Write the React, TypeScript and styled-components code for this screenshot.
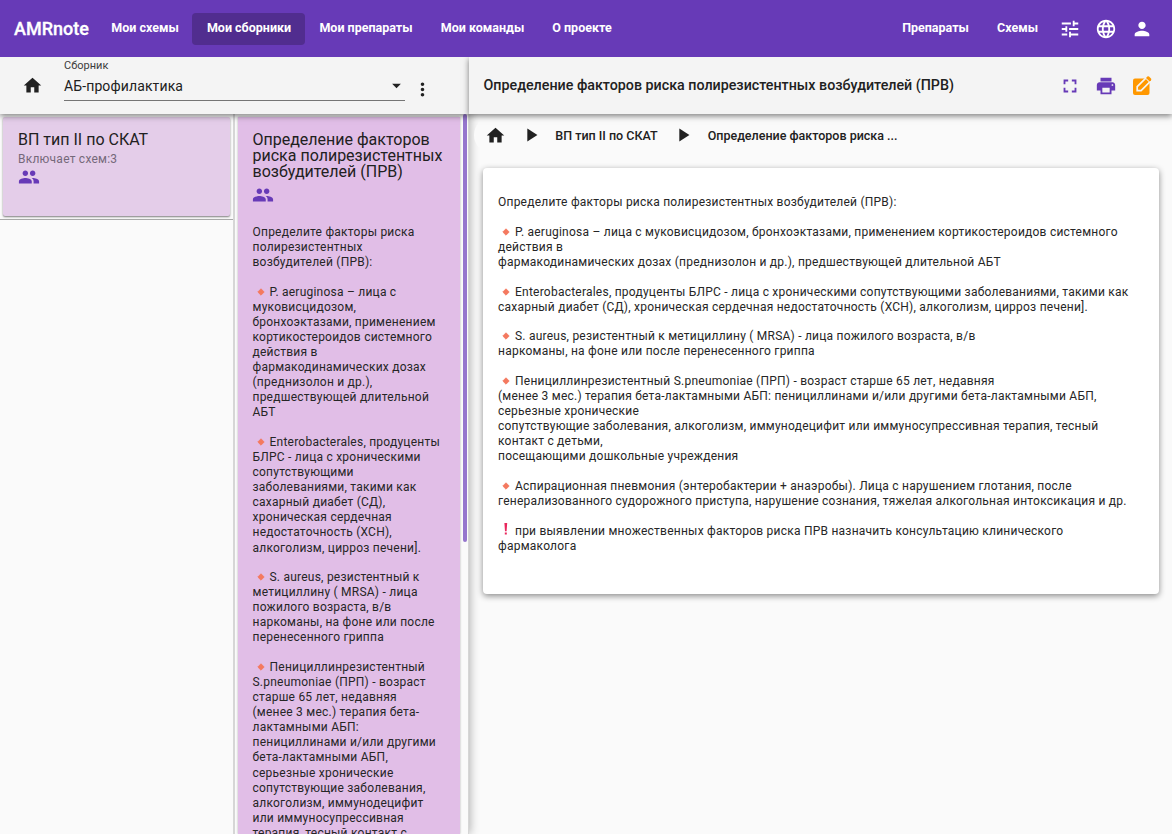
import React from 'react';
import styled, { createGlobalStyle } from 'styled-components';
import { MdHome, MdTune, MdLanguage, MdPerson, MdFullscreen, MdPrint, MdGroup, MdMoreVert, MdPlayArrow, MdArrowDropDown } from 'react-icons/md';

const Global = createGlobalStyle`
  * { box-sizing: border-box; }
  body { margin: 0; overflow: hidden; background: #fafafa; color: #212121; font-family: Roboto, "Liberation Sans", sans-serif; }
  svg { display: block; flex: none; }
`;

const Page = styled.div`
  height: 834px;
  display: flex;
  flex-direction: column;
  overflow: hidden;
`;

const Header = styled.header`
  height: 57px;
  flex: none;
  display: flex;
  align-items: center;
  position: relative;
  z-index: 3;
  padding: 0 19.5px 0 14px;
  background: #673ab7;
  color: #fff;
`;

const Brand = styled.div`
  width: 83px;
  font-size: 18px;
  font-weight: 500;
  white-space: nowrap;
  -webkit-text-stroke: 0.3px #fff;
`;

const NavItem = styled.a<{ $active?: boolean; $width: number }>`
  width: ${p => p.$width}px;
  height: 32px;
  flex: none;
  display: flex;
  align-items: center;
  justify-content: center;
  padding: 0 0 2px 1px;
  border-radius: 4px;
  background: ${p => (p.$active ? '#512d8f' : 'transparent')};
  font-size: 12.5px;
  font-weight: 700;
  white-space: nowrap;
`;

const Spacer = styled.div`
  flex: 1;
`;

const HeaderIcons = styled.div`
  display: flex;
  gap: 14px;
  margin-left: 7px;
`;

const Main = styled.main`
  flex: 1;
  min-height: 0;
  display: flex;
`;

const Side = styled.aside`
  width: 469px;
  flex: none;
  display: flex;
  flex-direction: column;
  position: relative;
  z-index: 1;
  background: #fafafa;
  border-right: 1px solid #d6d6d6;
  box-shadow: 1px 0 9px rgba(0, 0, 0, 0.3);
`;

const Bar = styled.div`
  height: 57px;
  flex: none;
  display: flex;
  align-items: center;
  position: relative;
  z-index: 2;
  background: #f4f4f4;
  box-shadow: 0 2px 6px rgba(0, 0, 0, 0.5);
`;

const SideBar = styled(Bar)`
  padding-left: 21.5px;
  margin-right: -1px;
`;

const Select = styled.div`
  width: 341px;
  height: 43px;
  margin: 0 7px 13px 21.5px;
  display: flex;
  flex-direction: column;
  border-bottom: 1px solid #757575;
`;

const SelectLabel = styled.span`
  font-size: 11px;
  line-height: 16px;
  color: #3c3c3c;
`;

const SelectValue = styled.div`
  display: flex;
  align-items: center;
  justify-content: space-between;
  height: 24px;
  margin-right: -2px;
  font-size: 14px;
  letter-spacing: 0.12px;
`;

const Kebab = styled.div`
  padding-top: 7px;
`;

const Columns = styled.div`
  flex: 1;
  min-height: 0;
  display: flex;
  overflow: hidden;
`;

const ListColumn = styled.div`
  width: 235px;
  flex: none;
  border-right: 2px solid #d6d6d6;
`;

const ListCell = styled.div`
  height: 106px;
  padding: 3px 3px 0;
  border-bottom: 1px solid #a8a8a8;
`;

const ListCard = styled.div`
  width: 227px;
  height: 99px;
  padding: 15px;
  background: #e4cde9;
  border-radius: 2px;
  box-shadow: 0 1px 2px rgba(0, 0, 0, 0.5);
`;

const CardTitle = styled.h2`
  margin: 0;
  font-size: 16px;
  line-height: 16px;
  font-weight: 400;
  white-space: pre;
`;

const CardMeta = styled.div`
  margin: 4px 0 0;
  font-size: 12px;
  line-height: 14px;
  letter-spacing: 0.23px;
  color: #75697a;
`;

const GroupIcon = styled(MdGroup)`
  margin-left: -0.5px;
  color: #673ab7;
`;

const DetailCard = styled.div`
  width: 222px;
  margin: 3px 3px 0;
  padding: 15px 15px 15px 14.5px;
  flex: none;
  background: #e1bee7;
  box-shadow: 0 0 2px rgba(0, 0, 0, 0.3);
`;

const TitleIcon = styled.div`
  margin: 4px 0 19px;
`;

const Thumb = styled.div`
  width: 4px;
  height: 428px;
  border-radius: 2px;
  background: #9575cd;
`;

const Para = styled.p`
  margin: 0 0 14.4px;
  color: #262626;
  font-size: 12px;
  line-height: 15.1px;
  letter-spacing: 0.23px;
  white-space: pre;
`;

const Mark = styled.span`
  display: inline-flex;
  width: 17px;
  height: 10px;
  padding-left: 4.3px;
  vertical-align: 0;
`;

const Content = styled.section`
  flex: 1;
  min-width: 0;
  display: flex;
  flex-direction: column;
`;

const ContentBar = styled(Bar)`
  padding: 0 19.5px 0 14.5px;
  gap: 14px;
`;

const ContentTitle = styled.h1`
  flex: 1;
  margin: 0;
  padding-bottom: 1px;
  font-size: 14.28px;
  font-weight: 500;
`;

const Crumbs = styled.nav`
  height: 36px;
  margin: 3px 0 0 5px;
  padding-left: 10.5px;
  display: flex;
  align-items: center;
  position: relative;
  z-index: 1;
  font-size: 12.5px;
  font-weight: 500;
  border-radius: 18px;
  background: #fafafa;
`;

const CrumbArrow = styled.div<{ $before: number; $after: number }>`
  margin: 0 ${p => p.$after}px 0 ${p => p.$before}px;
`;

const Article = styled.article`
  position: relative;
  z-index: 1;
  width: 676px;
  height: 426px;
  margin: 15px 0 0 14px;
  padding: 27.4px 15px;
  background: #fff;
  border-radius: 4px;
  box-shadow: 0 2px 6px rgba(0, 0, 0, 0.45);
`;

const Diamond = () => (
  <Mark><svg width="8" height="8" viewBox="0 0 8 8"><path d="M4 .8 7.2 4 4 7.2.8 4z" fill="#f4795f" stroke="#f4795f" strokeWidth=".8" strokeLinejoin="round" /></svg></Mark>
);
const Exclamation = () => (
  <Mark><svg width="6" height="12" viewBox="0 0 6 12"><path d="M2.4 0h2.8L4.6 8.3H3zM2.8 9.6h2v2h-2z" fill="#e9265c" /></svg></Mark>
);
const EditIcon = () => (
  <svg width="22" height="22" viewBox="0 0 22 22">
    <rect x="2" y="3.5" width="16.5" height="16.5" rx="2" fill="#ff9800" />
    <path d="M6.2 11.7 15 2.9l3.9 3.9-8.8 8.8H6.2z" fill="#ff9800" stroke="#f4f4f4" strokeWidth="1.7" />
    <path d="m15 3 1.4-1.4q.8-.7 1.6 0l2 2q.7.8 0 1.6l-1.4 1.4z" fill="#ff9800" />
  </svg>
);

type Block = { mark?: 'diamond' | 'warn'; text: string };

const sideText: Block[] = [
  { text: 'Определите факторы риска\nполирезистентных\nвозбудителей (ПРВ):' },
  { mark: 'diamond', text: 'P. aeruginosa – лица с\nмуковисцидозом,\nбронхоэктазами, применением\nкортикостероидов системного\nдействия в\nфармакодинамических дозах\n(преднизолон и др.),\nпредшествующей длительной\nАБТ' },
  { mark: 'diamond', text: 'Enterobacterales, продуценты\nБЛРС - лица с хроническими\nсопутствующими\nзаболеваниями, такими как\nсахарный диабет (СД),\nхроническая сердечная\nнедостаточность (ХСН),\nалкоголизм, цирроз печени].' },
  { mark: 'diamond', text: 'S. aureus, резистентный к\nметициллину ( MRSA) - лица\nпожилого возраста, в/в\nнаркоманы, на фоне или после\nперенесенного гриппа' },
  { mark: 'diamond', text: 'Пенициллинрезистентный\nS.pneumoniae (ПРП) - возраст\nстарше 65 лет, недавняя\n(менее 3 мес.) терапия бета-\nлактамными АБП:\nпенициллинами и/или другими\nбета-лактамными АБП,\nсерьезные хронические\nсопутствующие заболевания,\nалкоголизм, иммунодецифит\nили иммуносупрессивная\nтерапия, тесный контакт с' },
];

const mainText: Block[] = [
  { text: 'Определите факторы риска полирезистентных возбудителей (ПРВ):' },
  { mark: 'diamond', text: 'P. aeruginosa – лица с муковисцидозом, бронхоэктазами, применением кортикостероидов системного\nдействия в\nфармакодинамических дозах (преднизолон и др.), предшествующей длительной АБТ' },
  { mark: 'diamond', text: 'Enterobacterales, продуценты БЛРС - лица с хроническими сопутствующими заболеваниями, такими как\nсахарный диабет (СД), хроническая сердечная недостаточность (ХСН), алкоголизм, цирроз печени].' },
  { mark: 'diamond', text: 'S. aureus, резистентный к метициллину ( MRSA) - лица пожилого возраста, в/в\nнаркоманы, на фоне или после перенесенного гриппа' },
  { mark: 'diamond', text: 'Пенициллинрезистентный S.pneumoniae (ПРП) - возраст старше 65 лет, недавняя\n(менее 3 мес.) терапия бета-лактамными АБП: пенициллинами и/или другими бета-лактамными АБП,\nсерьезные хронические\nсопутствующие заболевания, алкоголизм, иммунодецифит или иммуносупрессивная терапия, тесный\nконтакт с детьми,\nпосещающими дошкольные учреждения' },
  { mark: 'diamond', text: 'Аспирационная пневмония (энтеробактерии + анаэробы). Лица с нарушением глотания, после\nгенерализованного судорожного приступа, нарушение сознания, тяжелая алкогольная интоксикация и др.' },
  { mark: 'warn', text: 'при выявлении множественных факторов риска ПРВ назначить консультацию клинического\nфармаколога' },
];

const Blocks = ({ items }: { items: Block[] }) => (
  <>
    {items.map((b, i) => (
      <Para key={i}>
        {b.mark === 'diamond' && <Diamond />}
        {b.mark === 'warn' && <Exclamation />}
        {b.text}
      </Para>
    ))}
  </>
);

export default function App() {
  return (
    <Page>
      <Global />
      <Header>
        <Brand>AMRnote</Brand>
        <NavItem $width={95}>Мои схемы</NavItem>
        <NavItem $width={113} $active>Мои сборники</NavItem>
        <NavItem $width={121}>Мои препараты</NavItem>
        <NavItem $width={112}>Мои команды</NavItem>
        <NavItem $width={87}>О проекте</NavItem>
        <Spacer />
        <NavItem $width={95}>Препараты</NavItem>
        <NavItem $width={69}>Схемы</NavItem>
        <HeaderIcons>
          <MdTune size={22} />
          <MdLanguage size={22} />
          <MdPerson size={22} />
        </HeaderIcons>
      </Header>
      <Main>
        <Side>
          <SideBar>
            <MdHome size={21} />
            <Select>
              <SelectLabel>Сборник</SelectLabel>
              <SelectValue>АБ-профилактика<MdArrowDropDown size={21} /></SelectValue>
            </Select>
            <Kebab><MdMoreVert size={21} /></Kebab>
          </SideBar>
          <Columns>
            <ListColumn>
              <ListCell>
                <ListCard>
                  <CardTitle>ВП тип II по СКАТ</CardTitle>
                  <CardMeta>Включает схем:3</CardMeta>
                  <GroupIcon size={22} />
                </ListCard>
              </ListCell>
            </ListColumn>
            <DetailCard>
              <CardTitle>{'Определение факторов\nриска полирезистентных\nвозбудителей (ПРВ)'}</CardTitle>
              <TitleIcon><GroupIcon size={22} /></TitleIcon>
              <Blocks items={sideText} />
            </DetailCard>
            <Thumb />
          </Columns>
        </Side>
        <Content>
          <ContentBar>
            <ContentTitle>Определение факторов риска полирезистентных возбудителей (ПРВ)</ContentTitle>
            <MdFullscreen size={22} color="#673ab7" />
            <MdPrint size={22} color="#673ab7" />
            <EditIcon />
          </ContentBar>
          <Crumbs>
            <MdHome size={21} />
            <CrumbArrow $before={14.5} $after={13.3}><MdPlayArrow size={22} /></CrumbArrow>
            ВП тип II по СКАТ
            <CrumbArrow $before={14.5} $after={13.5}><MdPlayArrow size={22} /></CrumbArrow>
            Определение факторов риска ...
          </Crumbs>
          <Article><Blocks items={mainText} /></Article>
        </Content>
      </Main>
    </Page>
  );
}
